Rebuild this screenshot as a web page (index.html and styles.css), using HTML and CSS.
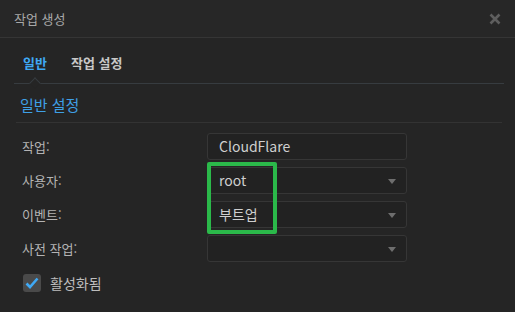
FILE: index.html
```html
<!DOCTYPE html>
<html lang="ko">
<head>
	<meta charset="utf-8">
	<meta name="viewport" content="width=device-width, initial-scale=1">
	<title>작업 생성</title>
	<link rel="stylesheet" href="styles.css">
</head>
<body>
	<div class="dialog" role="dialog">
		<div class="header">
			<span class="title">작업 생성</span>
			<svg class="close" width="12" height="12" viewBox="0 0 12 12">
				<path d="M1.5 1.5 L10.5 10.5 M10.5 1.5 L1.5 10.5" stroke="#5e5e5e" stroke-width="2.6" fill="none"/>
			</svg>
		</div>

		<div class="tabs">
			<span class="tab active">일반</span>
			<span class="tab">작업 설정</span>
		</div>

		<div class="section-title">일반 설정</div>

		<div class="form">
			<label class="label">작업:</label>
			<div class="field">CloudFlare</div>

			<label class="label">사용자:</label>
			<div class="field select">root</div>

			<label class="label">이벤트:</label>
			<div class="field select">부트업</div>

			<label class="label">사전 작업:</label>
			<div class="field select"></div>

			<div class="highlight"></div>
		</div>

		<div class="check-row">
			<span class="checkbox">
				<svg width="14" height="12" viewBox="0 0 14 12">
					<path d="M1.5 6.5 L5 10 L12.5 1.5" stroke="#3fa9f5" stroke-width="2.6" fill="none"/>
				</svg>
			</span>
			<span class="check-label">활성화됨</span>
		</div>
	</div>
</body>
</html>
```

FILE: styles.css
```css
body {
	margin: 0;
	padding: 0;
	background-color: #252525;
	font-family: 'Noto Sans CJK KR', 'Noto Sans', sans-serif;
	color: #c4c4c4;
}

.dialog {
	width: 515px;
	height: 312px;
	background-color: #252525;
	overflow: hidden;
}

.header {
	height: 37px;
	display: flex;
	align-items: center;
	justify-content: space-between;
	padding: 0 14px 0 14px;
	background-color: #272727;
	border-bottom: 1px solid #353535;
}

.title {
	font-size: 13px;
	color: #a8a8a8;
	font-weight: 400;
}

.tabs {
	position: relative;
	display: flex;
	gap: 24px;
	margin: 0 11px 0 14px;
	padding: 15px 0 10px 9px;
	border-bottom: 1px solid #373c40;
}

.tab {
	font-size: 13px;
	line-height: 20px;
	font-weight: 700;
	color: #c8c8c8;
}

.tab.active {
	position: relative;
	color: #3fa9f5;
}

.tab.active::after {
	content: "";
	position: absolute;
	left: 8px;
	bottom: -14px;
	width: 7px;
	height: 7px;
	background-color: #252525;
	border-top: 1px solid #373c40;
	border-left: 1px solid #373c40;
	transform: rotate(45deg);
}

.section-title {
	margin: 0 13px 0 16px;
	padding: 11px 0 7px 4px;
	font-size: 15px;
	line-height: 20px;
	color: #3fa0e6;
	border-bottom: 1px solid #333;
}

.form {
	position: relative;
	display: grid;
	grid-template-columns: 185px 200px;
	row-gap: 7px;
	margin-top: 10px;
	padding-left: 22px;
}

.label {
	font-size: 13px;
	line-height: 27px;
	color: #b4b4b4;
}

.field {
	position: relative;
	height: 25px;
	line-height: 25px;
	padding: 0 11px;
	background-color: #222;
	border: 1px solid #363636;
	border-radius: 3px;
	font-size: 14px;
	color: #cfcfcf;
}

.select::after {
	content: "";
	position: absolute;
	right: 10px;
	top: 11px;
	border-left: 4px solid transparent;
	border-right: 4px solid transparent;
	border-top: 5px solid #6e6e6e;
}

.highlight {
	position: absolute;
	left: 207px;
	top: 29px;
	width: 62px;
	height: 64px;
	border: 4px solid #2bb94a;
	border-radius: 2px;
}

.check-row {
	display: flex;
	align-items: center;
	gap: 9px;
	margin-top: 11px;
	padding-left: 23px;
}

.checkbox {
	width: 18px;
	height: 18px;
	display: flex;
	align-items: center;
	justify-content: center;
	background-color: #4a4a4a;
	border-radius: 3px;
}

.check-label {
	font-size: 14px;
	color: #bdbdbd;
}
```
